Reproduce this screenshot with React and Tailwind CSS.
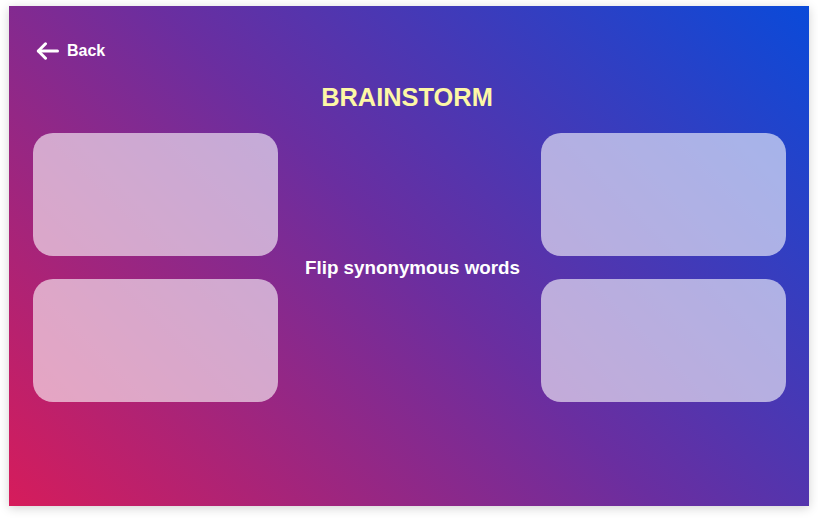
import React from "react";

export default function App() {
  return (
    <div className="w-[818px] h-[518px] bg-white pl-[9px] pt-[6px]" style={{ fontFamily: '"Liberation Sans", Arial, sans-serif' }}>
      <div className="w-[800px] h-[500px] flex flex-col shadow-[0_2px_10px_rgba(0,0,0,0.18)] bg-[linear-gradient(45deg,#d61c5b_0%,#6a2ea0_50%,#0a4ad9_100%)]">
        <div className="flex items-center pt-[36px] pl-[27px] h-[54px] gap-[8px] text-white">
          <svg width="23" height="18" viewBox="0 0 23 18" fill="none" stroke="white" strokeWidth="3" strokeLinecap="round" strokeLinejoin="round">
            <path d="M21.5 9H2.5" />
            <path d="M9.5 1.8L2.3 9L9.5 16.2" />
          </svg>
          <span className="text-[16px] font-bold leading-none">Back</span>
        </div>
        <div className="mt-[24.75px] text-center text-[25.4px] leading-[25px] font-bold text-[#fdf7a6] pr-[4px]">BRAINSTORM</div>
        <div className="mt-[23.25px] pl-[24px] pr-[23px] grid grid-cols-[245px_1fr_245px] grid-rows-[123px_123px] gap-y-[23px]">
          <div className="rounded-[20px] bg-white/60"></div>
          <div className="row-span-2 flex items-center justify-center pl-[6px] pt-[2px] text-white font-bold text-[18.8px]">Flip synonymous words</div>
          <div className="rounded-[20px] bg-white/60"></div>
          <div className="rounded-[20px] bg-white/60"></div>
          <div className="rounded-[20px] bg-white/60"></div>
        </div>
      </div>
    </div>
  );
}
